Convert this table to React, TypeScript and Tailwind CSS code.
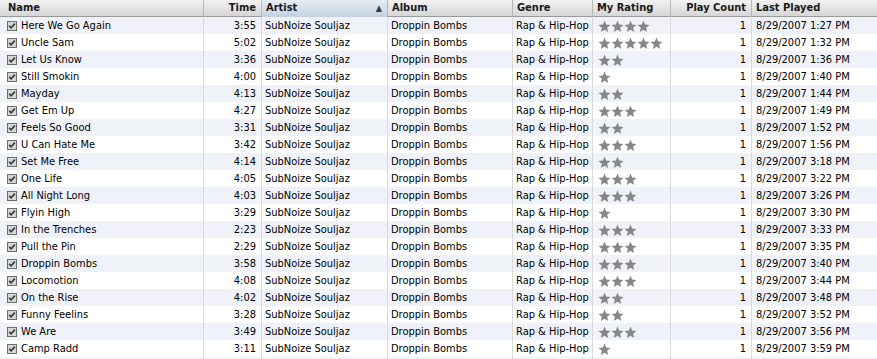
import React from "react";

type Row = [string, string, number, string];
const rows: Row[] = [
  ["Here We Go Again", "3:55", 4, "1:27 PM"],
  ["Uncle Sam", "5:02", 5, "1:32 PM"],
  ["Let Us Know", "3:36", 2, "1:36 PM"],
  ["Still Smokin", "4:00", 1, "1:40 PM"],
  ["Mayday", "4:13", 2, "1:44 PM"],
  ["Get Em Up", "4:27", 3, "1:49 PM"],
  ["Feels So Good", "3:31", 2, "1:52 PM"],
  ["U Can Hate Me", "3:42", 3, "1:56 PM"],
  ["Set Me Free", "4:14", 2, "3:18 PM"],
  ["One Life", "4:05", 3, "3:22 PM"],
  ["All Night Long", "4:03", 3, "3:26 PM"],
  ["Flyin High", "3:29", 1, "3:30 PM"],
  ["In the Trenches", "2:23", 3, "3:33 PM"],
  ["Pull the Pin", "2:29", 3, "3:35 PM"],
  ["Droppin Bombs", "3:58", 3, "3:40 PM"],
  ["Locomotion", "4:08", 3, "3:44 PM"],
  ["On the Rise", "4:02", 2, "3:48 PM"],
  ["Funny Feelins", "3:28", 2, "3:52 PM"],
  ["We Are", "3:49", 3, "3:56 PM"],
  ["Camp Radd", "3:11", 1, "3:59 PM"],
];

const cols = "grid grid-cols-[204px_58px_126px_125px_80px_78px_81px_1fr]";

function Check() {
  return (
    <svg width="10" height="10" viewBox="0 0 10 10" className="shrink-0">
      <rect x="0.5" y="0.5" width="9" height="9" fill="#d6d6d6" stroke="#6e6e6e" />
      <path d="M2.2 4.8 L4.1 6.8 L7.9 2.6" fill="none" stroke="#3c3c3c" strokeWidth="1.7" />
    </svg>
  );
}

function Star() {
  return (
    <svg width="13" height="13" viewBox="0 0 24 24">
      <path
        d="M12 1 L15 8.4 L23 9 L16.9 14.2 L18.8 22 L12 17.8 L5.2 22 L7.1 14.2 L1 9 L9 8.4 Z"
        fill="#878787"
      />
    </svg>
  );
}

const H = "h-full flex items-center border-r border-[#b8b8b8] px-[5px]";
const C = "h-full flex items-center pt-px border-r border-[#dadada] overflow-hidden whitespace-nowrap";

export default function App() {
  return (
    <div
      className="w-[877px] h-[359px] overflow-hidden bg-white text-[11px] text-black"
      style={{ fontFamily: '"DejaVu Sans Condensed", "DejaVu Sans", sans-serif' }}
    >
      <div className={`${cols} h-[17px] border-b border-[#9a9a9a] bg-gradient-to-b from-[#f2f2f2] to-[#d6d6d6] font-bold text-[#1a1a1a]`}>
        <div className={`${H} pl-[8px]`}>Name</div>
        <div className={`${H} justify-end`}>Time</div>
        <div className={`${H} justify-between bg-gradient-to-b from-[#e6edf5] to-[#c3d1e0] pl-[4px] pr-[5px]`}>
          <span>Artist</span>
          <span className="text-[9px] text-[#2e3f55]">▲</span>
        </div>
        <div className={`${H} pl-[4px]`}>Album</div>
        <div className={`${H} pl-[4px]`}>Genre</div>
        <div className={`${H} pl-[4px]`}>My Rating</div>
        <div className={`${H} justify-end`}>Play Count</div>
        <div className="h-full flex items-center pl-[4px]">Last Played</div>
      </div>
      {[...rows, null].map((r, i) => (
        <div key={i} className={`${cols} h-[17px] ${i % 2 === 0 ? "bg-[#eff3f9]" : "bg-white"}`}>
          {r ? (
            <>
              <div className={`${C} pl-[7px] gap-[4px]`}>
                <Check />
                <span>{r[0]}</span>
              </div>
              <div className={`${C} justify-end pr-[5px]`}>{r[1]}</div>
              <div className={`${C} pl-[3px]`}>SubNoize Souljaz</div>
              <div className={`${C} pl-[3px]`}>Droppin Bombs</div>
              <div className={`${C} pl-[3px]`}>Rap &amp; Hip-Hop</div>
              <div className={`${C} pl-[5px] gap-0`}>
                {Array.from({ length: r[2] }).map((_, k) => (
                  <Star key={k} />
                ))}
              </div>
              <div className={`${C} justify-end pr-[5px]`}>1</div>
              <div className="h-full flex items-center pt-px pl-[4px] whitespace-nowrap">8/29/2007 {r[3]}</div>
            </>
          ) : (
            <>
              {Array.from({ length: 7 }).map((_, k) => (
                <div key={k} className={C} />
              ))}
              <div />
            </>
          )}
        </div>
      ))}
    </div>
  );
}
